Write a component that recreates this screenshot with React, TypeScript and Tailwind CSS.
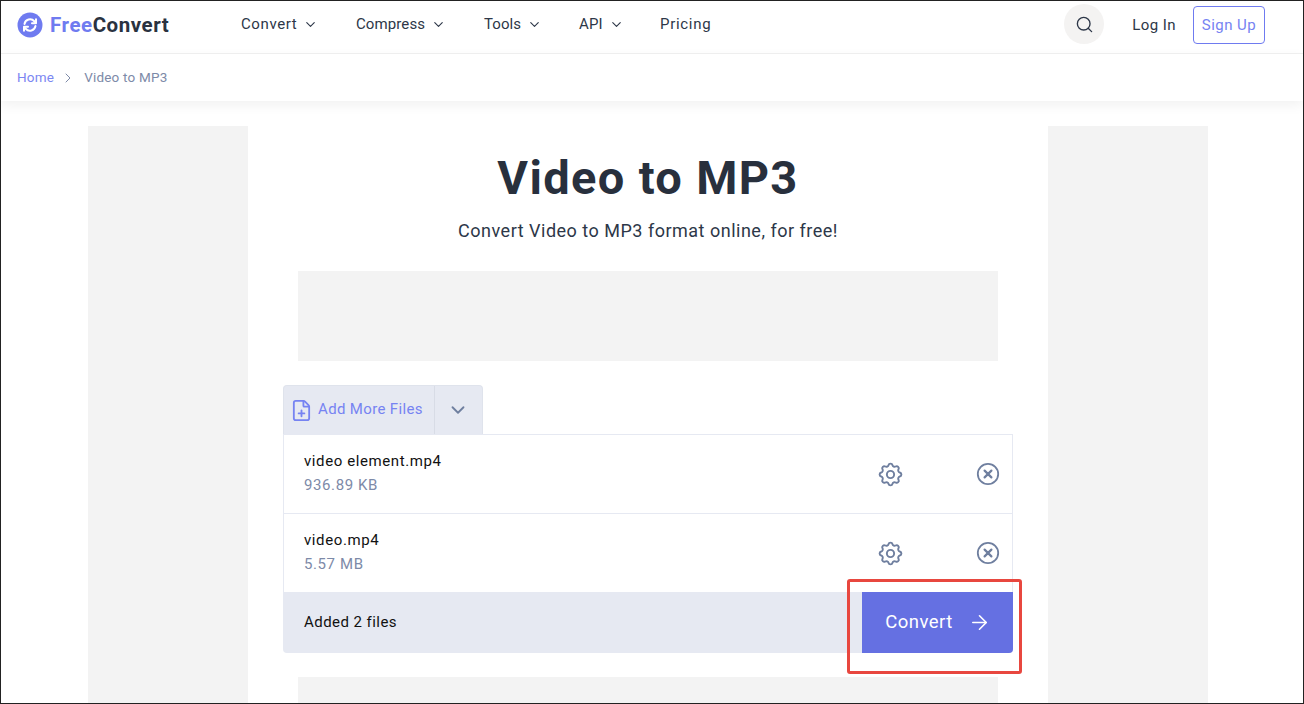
import { ChevronDown, ChevronRight, Search, ArrowRight, FilePlus } from "lucide-react";
import { HiOutlineCog } from "react-icons/hi";

const font = { fontFamily: '"Roboto", "Liberation Sans", sans-serif' };

function NavItem({ label, caret = true, tracking = "tracking-[0.45px]" }: { label: string; caret?: boolean; tracking?: string }) {
  return (
    <div className={`flex items-center gap-[6px] pb-[1px] text-[15px] text-[#2d3748] ${tracking}`}>
      <span>{label}</span>
      {caret && <ChevronDown size={15} strokeWidth={1.8} />}
    </div>
  );
}

function CloseCircle() {
  return (
    <svg width="24" height="24" viewBox="0 0 24 24" fill="none" stroke="#6f7f9f" className="ml-[71px]">
      <circle cx="12" cy="12" r="10.2" strokeWidth="1.8" />
      <path d="M8.6 8.6l6.8 6.8M15.4 8.6l-6.8 6.8" strokeWidth="2.2" strokeLinecap="round" />
    </svg>
  );
}

function FileRow({ name, size }: { name: string; size: string }) {
  return (
    <div className="flex h-[79px] items-center border border-b-0 border-[#e6e9f2] bg-white pl-5 pr-[12px]">
      <div className="flex-1 pb-[2px]">
        <div className="text-[15px] leading-[22px] tracking-[0.6px] text-[#111]">{name}</div>
        <div className="mt-[2px] text-[15px] leading-[22px] tracking-[0.6px] text-[#7d8aa8]">{size}</div>
      </div>
      <HiOutlineCog size={29} strokeWidth={1.6} className="text-[#6f7f9f]" />
      <CloseCircle />
    </div>
  );
}

export default function App() {
  return (
    <div style={font} className="relative h-[704px] w-[1304px] overflow-hidden border border-[#222] bg-white">
      <header className="flex h-[53px] items-center border-b border-[#f1f1f1] pb-[4px] pl-4 pr-[38px]">
        <svg width="26" height="26" viewBox="0 0 26 26" className="mb-[1px] shrink-0">
          <circle cx="13" cy="13" r="12.5" fill="#6f7bf0" />
          <path d="M7.5 12a5.7 5.7 0 0 1 9.8-2.8l1.2 1.3M18.5 14a5.7 5.7 0 0 1-9.8 2.8l-1.2-1.3" fill="none" stroke="#fff" strokeWidth="2" strokeLinecap="round" />
          <path d="M19 7.2v4h-4M7 18.8v-4h4" fill="none" stroke="#fff" strokeWidth="2" strokeLinecap="round" strokeLinejoin="round" />
        </svg>
        <div className="ml-[7px] w-[119px] whitespace-nowrap text-[20.5px] font-bold tracking-[0.55px]">
          <span className="text-[#6f7bf0]">Free</span>
          <span className="text-[#2a3240]">Convert</span>
        </div>
        <nav className="ml-[72px] grid grid-cols-[115px_128px_95px_81px_auto] items-center">
          <NavItem label="Convert" tracking="tracking-[0.6px]" />
          <NavItem label="Compress" tracking="tracking-[0.1px]" />
          <NavItem label="Tools" tracking="tracking-[0.05px]" />
          <NavItem label="API" tracking="tracking-[0.1px]" />
          <NavItem label="Pricing" caret={false} tracking="tracking-[0.7px]" />
        </nav>
        <div className="mb-[2px] ml-auto flex h-10 w-10 items-center justify-center rounded-full bg-[#f4f3f2] text-[#2d3748]">
          <Search size={19} strokeWidth={1.7} />
        </div>
        <span className="ml-7 text-[15px] tracking-[0.45px] text-[#2d3748]">Log In</span>
        <div className="ml-[17px] flex h-[38px] w-[72px] items-center justify-center rounded-[4px] border border-[#6f7bf0] text-[15px] tracking-[0.45px] text-[#7683f2]">
          Sign Up
        </div>
      </header>

      <div className="flex h-[47px] items-center pl-[16px] text-[13.5px] tracking-[0.2px] shadow-[0_4px_12px_rgba(0,0,0,0.06)]">
        <span className="text-[#7b86f2]">Home</span>
        <ChevronRight size={16} strokeWidth={1.5} className="ml-[6px] text-[#7d8aa8]" />
        <span className="ml-[8px] text-[#7d8aa8]">Video to MP3</span>
      </div>

      <main className="mt-[25px] flex justify-center pr-[8px]">
        <div className="h-[600px] w-[160px] bg-[#f3f3f3]" />
        <div className="flex w-[800px] flex-col items-center">
          <h1 className="mt-[24px] text-[47px] font-bold leading-[56px] tracking-[1.35px] text-[#28303d]">Video to MP3</h1>
          <p className="mt-[13px] text-[18px] leading-[24px] tracking-[0.5px] text-[#2d3748]">Convert Video to MP3 format online, for free!</p>
          <div className="mt-[28px] h-[90px] w-[700px] shrink-0 bg-[#f3f3f3]" />
          <div className="mt-6 w-[730px]">
            <div className="flex h-[49px] w-[200px] items-center rounded-t-[4px] border border-b-0 border-[#dfe3ec] bg-[#e6e9f2]">
              <div className="flex h-full w-[151px] items-center border-r border-[#d8dce6] pl-[6px] text-[15px] tracking-[0.35px] text-[#7683f2]">
                <FilePlus size={23} strokeWidth={1.9} />
                <span className="ml-[5px] pb-[1px]">Add More Files</span>
              </div>
              <div className="flex flex-1 items-center justify-center pr-[2px] text-[#6f7f9f]">
                <ChevronDown size={22} strokeWidth={2} />
              </div>
            </div>
            <FileRow name="video element.mp4" size="936.89 KB" />
            <FileRow name="video.mp4" size="5.57 MB" />
            <div className="flex h-[61px] items-center overflow-hidden rounded-b-[4px] bg-[#e6e9f2]">
              <span className="flex-1 pl-[21px] text-[15px] tracking-[0.45px] text-[#111]">Added 2 files</span>
              <div className="flex h-full w-[151px] items-center justify-center gap-[15px] bg-[#6570e2] pl-[1px] text-[18.5px] tracking-[0.45px] text-white">
                <span>Convert</span>
                <ArrowRight size={23} strokeWidth={1.7} />
              </div>
            </div>
          </div>
          <div className="mt-6 h-[40px] w-[700px] shrink-0 bg-[#f3f3f3]" />
        </div>
        <div className="h-[600px] w-[160px] bg-[#f3f3f3]" />
      </main>

      <div className="absolute left-[846px] top-[578px] h-[95px] w-[175px] rounded-[3px] border-[3px] border-[#e8473f]" />
    </div>
  );
}
